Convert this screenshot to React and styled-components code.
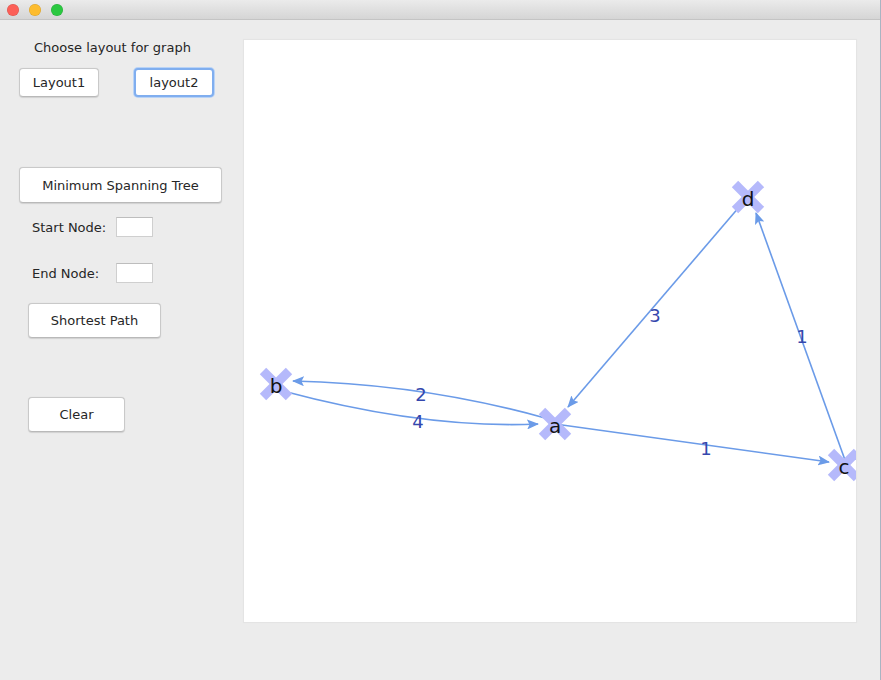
import React from "react";
import styled, { createGlobalStyle } from "styled-components";

const Global = createGlobalStyle`
  html, body { margin: 0; padding: 0; background: #ececec; }
  body { font-family: "DejaVu Sans", "Liberation Sans", sans-serif; }
  * { box-sizing: border-box; }
`;

const Window = styled.div`
  width: 881px;
  height: 680px;
  display: flex;
  flex-direction: column;
  background: #ececec;
  border-right: 1px solid #a9b4c2;
  overflow: hidden;
`;

const TitleBar = styled.div`
  height: 20px;
  flex: none;
  display: flex;
  align-items: center;
  gap: 10px;
  padding-left: 7px;
  background: linear-gradient(#ebebeb, #d5d5d5);
  border-bottom: 1px solid #c4c4c4;
`;

const Light = styled.span`
  width: 12px;
  height: 12px;
  border-radius: 50%;
  background: ${(p) => p.$c};
  box-shadow: inset 0 0 0 0.5px rgba(0, 0, 0, 0.15);
`;

const Body = styled.div`
  flex: 1;
  display: flex;
  padding: 20px 24px 0 0;
`;

const Sidebar = styled.div`
  width: 244px;
  flex: none;
  display: flex;
  flex-direction: column;
  align-items: flex-start;
  color: #262626;
  font-size: 13px;
`;

const Title = styled.div`
  margin: 0 0 0 34px;
  height: 16px;
  line-height: 16px;
`;

const ButtonRow = styled.div`
  display: flex;
  gap: 35px;
  margin: ${(p) => p.$top}px 0 0 ${(p) => p.$left}px;
`;

const Button = styled.button`
  width: ${(p) => p.$w}px;
  height: ${(p) => p.$h}px;
  margin: ${(p) => p.$top || 0}px 0 0 ${(p) => p.$left || 0}px;
  padding: 0;
  background: #ffffff;
  border: 1px solid #c9c9c9;
  border-bottom-color: #b9b9b9;
  border-radius: 4px;
  box-shadow: 0 0.5px 1px rgba(0, 0, 0, 0.12);
  font-family: "DejaVu Sans", "Liberation Sans", sans-serif;
  font-size: 13px;
  color: #262626;
  ${(p) =>
    p.$focus &&
    `
    border: 2px solid #80aeef;
    box-shadow: 0 0 0 1px #b9d3f6;
  `}
`;

const FieldRow = styled.div`
  display: flex;
  align-items: center;
  margin: ${(p) => p.$top}px 0 0 32px;
`;

const FieldLabel = styled.span`
  width: 84px;
`;

const Input = styled.div`
  width: 37px;
  height: 20px;
  background: #ffffff;
  border: 1px solid #cfcfcf;
  border-top-color: #bdbdbd;
`;

const Canvas = styled.div`
  width: 613px;
  height: 582px;
  background: #ffffff;
  box-shadow: 0 0 1px 1px #e4e4e4;
  overflow: hidden;
`;

const EDGE = "#6b9be8";
const LABEL = "#3547ad";

const nodes = [
  { id: "b", x: 32, y: 344 },
  { id: "a", x: 311, y: 384 },
  { id: "c", x: 600, y: 425 },
  { id: "d", x: 504, y: 157 },
];

const edges = [
  { d: "M39,351 Q181,389 294,384", label: "4", lx: 174, ly: 381 },
  { d: "M301,378 Q179,344 49,341", label: "2", lx: 177, ly: 354 },
  { d: "M311,384 L585,422", label: "1", lx: 462, ly: 408 },
  { d: "M496,166 L324,367", label: "3", lx: 411, ly: 275 },
  { d: "M601,420 L512,173", label: "1", lx: 558, ly: 296 },
];

function Graph() {
  return (
    <svg width="613" height="582" viewBox="0 0 613 582">
      <defs>
        <marker
          id="arr"
          viewBox="0 0 12 10"
          refX="11"
          refY="5"
          markerWidth="12"
          markerHeight="10"
          markerUnits="userSpaceOnUse"
          orient="auto"
        >
          <path d="M0,0 L12,5 L0,10 L2.5,5 Z" fill={EDGE} />
        </marker>
      </defs>
      {edges.map((e, i) => (
        <path key={i} d={e.d} fill="none" stroke={EDGE} strokeWidth="1.6" markerEnd="url(#arr)" />
      ))}
      {nodes.map((n) => (
        <g key={n.id} transform={`translate(${n.x},${n.y})`}>
          <line x1="-13" y1="-13" x2="13" y2="13" stroke="#b5b9fb" strokeWidth="9" />
          <line x1="-13" y1="13" x2="13" y2="-13" stroke="#b5b9fb" strokeWidth="9" />
          <text
            x="0"
            y="2"
            textAnchor="middle"
            dominantBaseline="central"
            fontFamily="DejaVu Sans, sans-serif"
            fontSize="20"
            fill="#111"
          >
            {n.id}
          </text>
        </g>
      ))}
      {edges.map((e, i) => (
        <text
          key={"l" + i}
          x={e.lx}
          y={e.ly}
          textAnchor="middle"
          dominantBaseline="central"
          fontFamily="DejaVu Sans, sans-serif"
          fontSize="18"
          fill={LABEL}
        >
          {e.label}
        </text>
      ))}
    </svg>
  );
}

export default function App() {
  return (
    <>
      <Global />
      <Window>
        <TitleBar>
          <Light $c="#fc5f57" />
          <Light $c="#fdbc2e" />
          <Light $c="#2ac840" />
        </TitleBar>
        <Body>
          <Sidebar>
            <Title>Choose layout for graph</Title>
            <ButtonRow $top={12} $left={19}>
              <Button $w={80} $h={29}>Layout1</Button>
              <Button $w={80} $h={29} $focus>layout2</Button>
            </ButtonRow>
            <Button $w={203} $h={36} $top={70} $left={19}>Minimum Spanning Tree</Button>
            <FieldRow $top={14}>
              <FieldLabel>Start Node:</FieldLabel>
              <Input />
            </FieldRow>
            <FieldRow $top={26}>
              <FieldLabel>End Node:</FieldLabel>
              <Input />
            </FieldRow>
            <Button $w={133} $h={35} $top={20} $left={28}>Shortest Path</Button>
            <Button $w={97} $h={35} $top={59} $left={28}>Clear</Button>
          </Sidebar>
          <Canvas>
            <Graph />
          </Canvas>
        </Body>
      </Window>
    </>
  );
}
